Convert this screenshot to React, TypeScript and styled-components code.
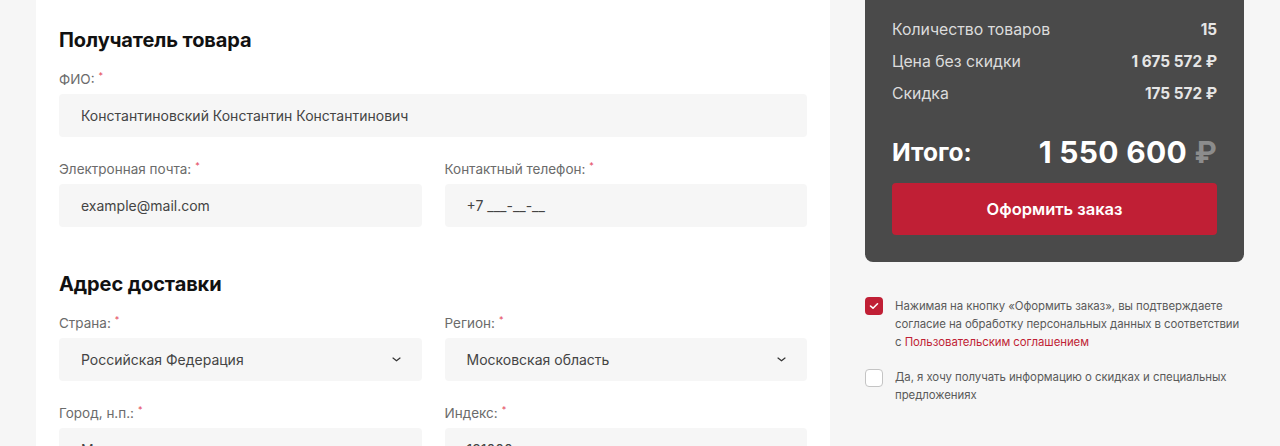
import React from "react";
import styled, { createGlobalStyle } from "styled-components";

const Global = createGlobalStyle`
  html, body { margin: 0; padding: 0; background: #f6f6f6; }
  body { font-family: Inter, "Noto Sans", "Liberation Sans", sans-serif; overflow: hidden; }
  * { box-sizing: border-box; }
`;

const Page = styled.div`
  display: grid;
  grid-template-columns: 794px 379px;
  column-gap: 35px;
  padding-left: 36px;
  height: 446px;
  overflow: hidden;
`;

const Card = styled.div`
  background: #fff;
  padding: 28px 23px 0 23px;
  height: 446px;
  display: flex;
  flex-direction: column;
`;

const Section = styled.section`
  display: flex;
  flex-direction: column;
  & + & { margin-top: 45px; }
`;

const Heading = styled.h2`
  margin: 0 0 19px 0;
  font-size: 20px;
  line-height: 24px;
  font-weight: 700;
  color: #111;
  letter-spacing: -0.1px;
`;

const Grid = styled.div<{ $cols: number }>`
  display: grid;
  grid-template-columns: repeat(${(p) => p.$cols}, 1fr);
  column-gap: 23px;
  row-gap: 24px;
`;

const Field = styled.div<{ $span?: number }>`
  display: flex;
  flex-direction: column;
  gap: 7px;
  grid-column: span ${(p) => p.$span ?? 1};
`;

const Label = styled.label`
  font-size: 13.5px;
  line-height: 16px;
  color: #6b6b6b;
`;

const Star = styled.span`
  color: #e4465a;
  font-size: 9px;
  line-height: 9px;
  vertical-align: top;
  margin-left: 4px;
`;

const InputBox = styled.div`
  height: 43px;
  background: #f6f6f6;
  border-radius: 4px;
  padding: 0 21px 0 22px;
  display: flex;
  align-items: center;
  justify-content: space-between;
  font-size: 14px;
  color: #444;
`;

const Side = styled.aside`
  display: flex;
  flex-direction: column;
`;

const Summary = styled.div`
  background: #4a4a4a;
  border-radius: 0 0 8px 8px;
  padding: 20px 27px 27px 27px;
  display: flex;
  flex-direction: column;
`;

const Rows = styled.div`
  display: flex;
  flex-direction: column;
  gap: 12px;
`;

const Row = styled.div`
  display: flex;
  justify-content: space-between;
  align-items: center;
  font-size: 15.8px;
  line-height: 20px;
  color: #dcdcdc;
`;

const RowValue = styled.span`
  font-weight: 700;
  color: #e6e6e6;
  font-size: 15.3px;
`;

const Total = styled.div`
  margin-top: 28px;
  display: flex;
  justify-content: space-between;
  align-items: center;
  height: 40px;
  color: #fff;
`;

const TotalLabel = styled.span`
  font-size: 24.5px;
  font-weight: 700;
`;

const TotalValue = styled.span`
  font-size: 30px;
  font-weight: 700;
  letter-spacing: 0.3px;
`;

const Rub = styled.span`
  color: #8c8c8c;
`;

const Button = styled.button`
  margin-top: 11px;
  height: 52px;
  border: none;
  border-radius: 4px;
  background: #c01f35;
  color: #fff;
  font-family: inherit;
  font-size: 16.5px;
  font-weight: 600;
`;

const Checks = styled.div`
  margin-top: 35px;
  display: flex;
  flex-direction: column;
  gap: 18px;
`;

const Check = styled.div`
  display: flex;
  align-items: flex-start;
  gap: 12px;
`;

const Box = styled.span<{ $checked?: boolean }>`
  flex: 0 0 18px;
  width: 18px;
  height: 18px;
  border-radius: 4px;
  background: ${(p) => (p.$checked ? "#c01f35" : "#fff")};
  border: ${(p) => (p.$checked ? "none" : "1px solid #c4c4c4")};
  display: flex;
  align-items: center;
  justify-content: center;
`;

const CheckText = styled.p`
  margin: -0.5px 0 0 0;
  font-size: 11.4px;
  line-height: 18px;
  color: #5a5a5a;
  letter-spacing: -0.05px;
  max-width: 352px;
`;

const Link = styled.a`
  color: #c01f35;
  text-decoration: none;
`;

const Chevron = () => (
  <svg width="9" height="5" viewBox="0 0 9 5" fill="none">
    <path d="M1 1 L4.5 3.8 L8 1" stroke="#333" strokeWidth="1.2" strokeLinecap="round" strokeLinejoin="round" />
  </svg>
);

const Tick = () => (
  <svg width="10" height="8" viewBox="0 0 10 8" fill="none">
    <path d="M1.5 4 L4 6.2 L8.5 1.8" stroke="#fff" strokeWidth="1.6" strokeLinecap="round" strokeLinejoin="round" />
  </svg>
);

const F = ({ label, value, span, select }: { label: string; value: string; span?: number; select?: boolean }) => (
  <Field $span={span}>
    <Label>
      {label}
      <Star>*</Star>
    </Label>
    <InputBox>
      <span>{value}</span>
      {select && <Chevron />}
    </InputBox>
  </Field>
);

export default function App() {
  return (
    <>
      <Global />
      <Page>
        <Card>
          <Section>
            <Heading>Получатель товара</Heading>
            <Grid $cols={2}>
              <F label="ФИО:" value="Константиновский Константин Константинович" span={2} />
              <F label="Электронная почта:" value="example@mail.com" />
              <F label="Контактный телефон:" value="+7 ___-__-__" />
            </Grid>
          </Section>
          <Section>
            <Heading>Адрес доставки</Heading>
            <Grid $cols={2}>
              <F label="Страна:" value="Российская Федерация" select />
              <F label="Регион:" value="Московская область" select />
              <F label="Город, н.п.:" value="Москва" />
              <F label="Индекс:" value="121000" />
            </Grid>
          </Section>
        </Card>
        <Side>
          <Summary>
            <Rows>
              <Row>
                <span>Количество товаров</span>
                <RowValue>15</RowValue>
              </Row>
              <Row>
                <span>Цена без скидки</span>
                <RowValue>1 675 572 ₽</RowValue>
              </Row>
              <Row>
                <span>Скидка</span>
                <RowValue>175 572 ₽</RowValue>
              </Row>
            </Rows>
            <Total>
              <TotalLabel>Итого:</TotalLabel>
              <TotalValue>
                1 550 600 <Rub>₽</Rub>
              </TotalValue>
            </Total>
            <Button>Оформить заказ</Button>
          </Summary>
          <Checks>
            <Check>
              <Box $checked>
                <Tick />
              </Box>
              <CheckText>
                Нажимая на кнопку «Оформить заказ», вы подтверждаете согласие на обработку персональных данных в соответствии с{" "}
                <Link href="#">Пользовательским соглашением</Link>
              </CheckText>
            </Check>
            <Check>
              <Box />
              <CheckText>Да, я хочу получать информацию о скидках и специальных предложениях</CheckText>
            </Check>
          </Checks>
        </Side>
      </Page>
    </>
  );
}
